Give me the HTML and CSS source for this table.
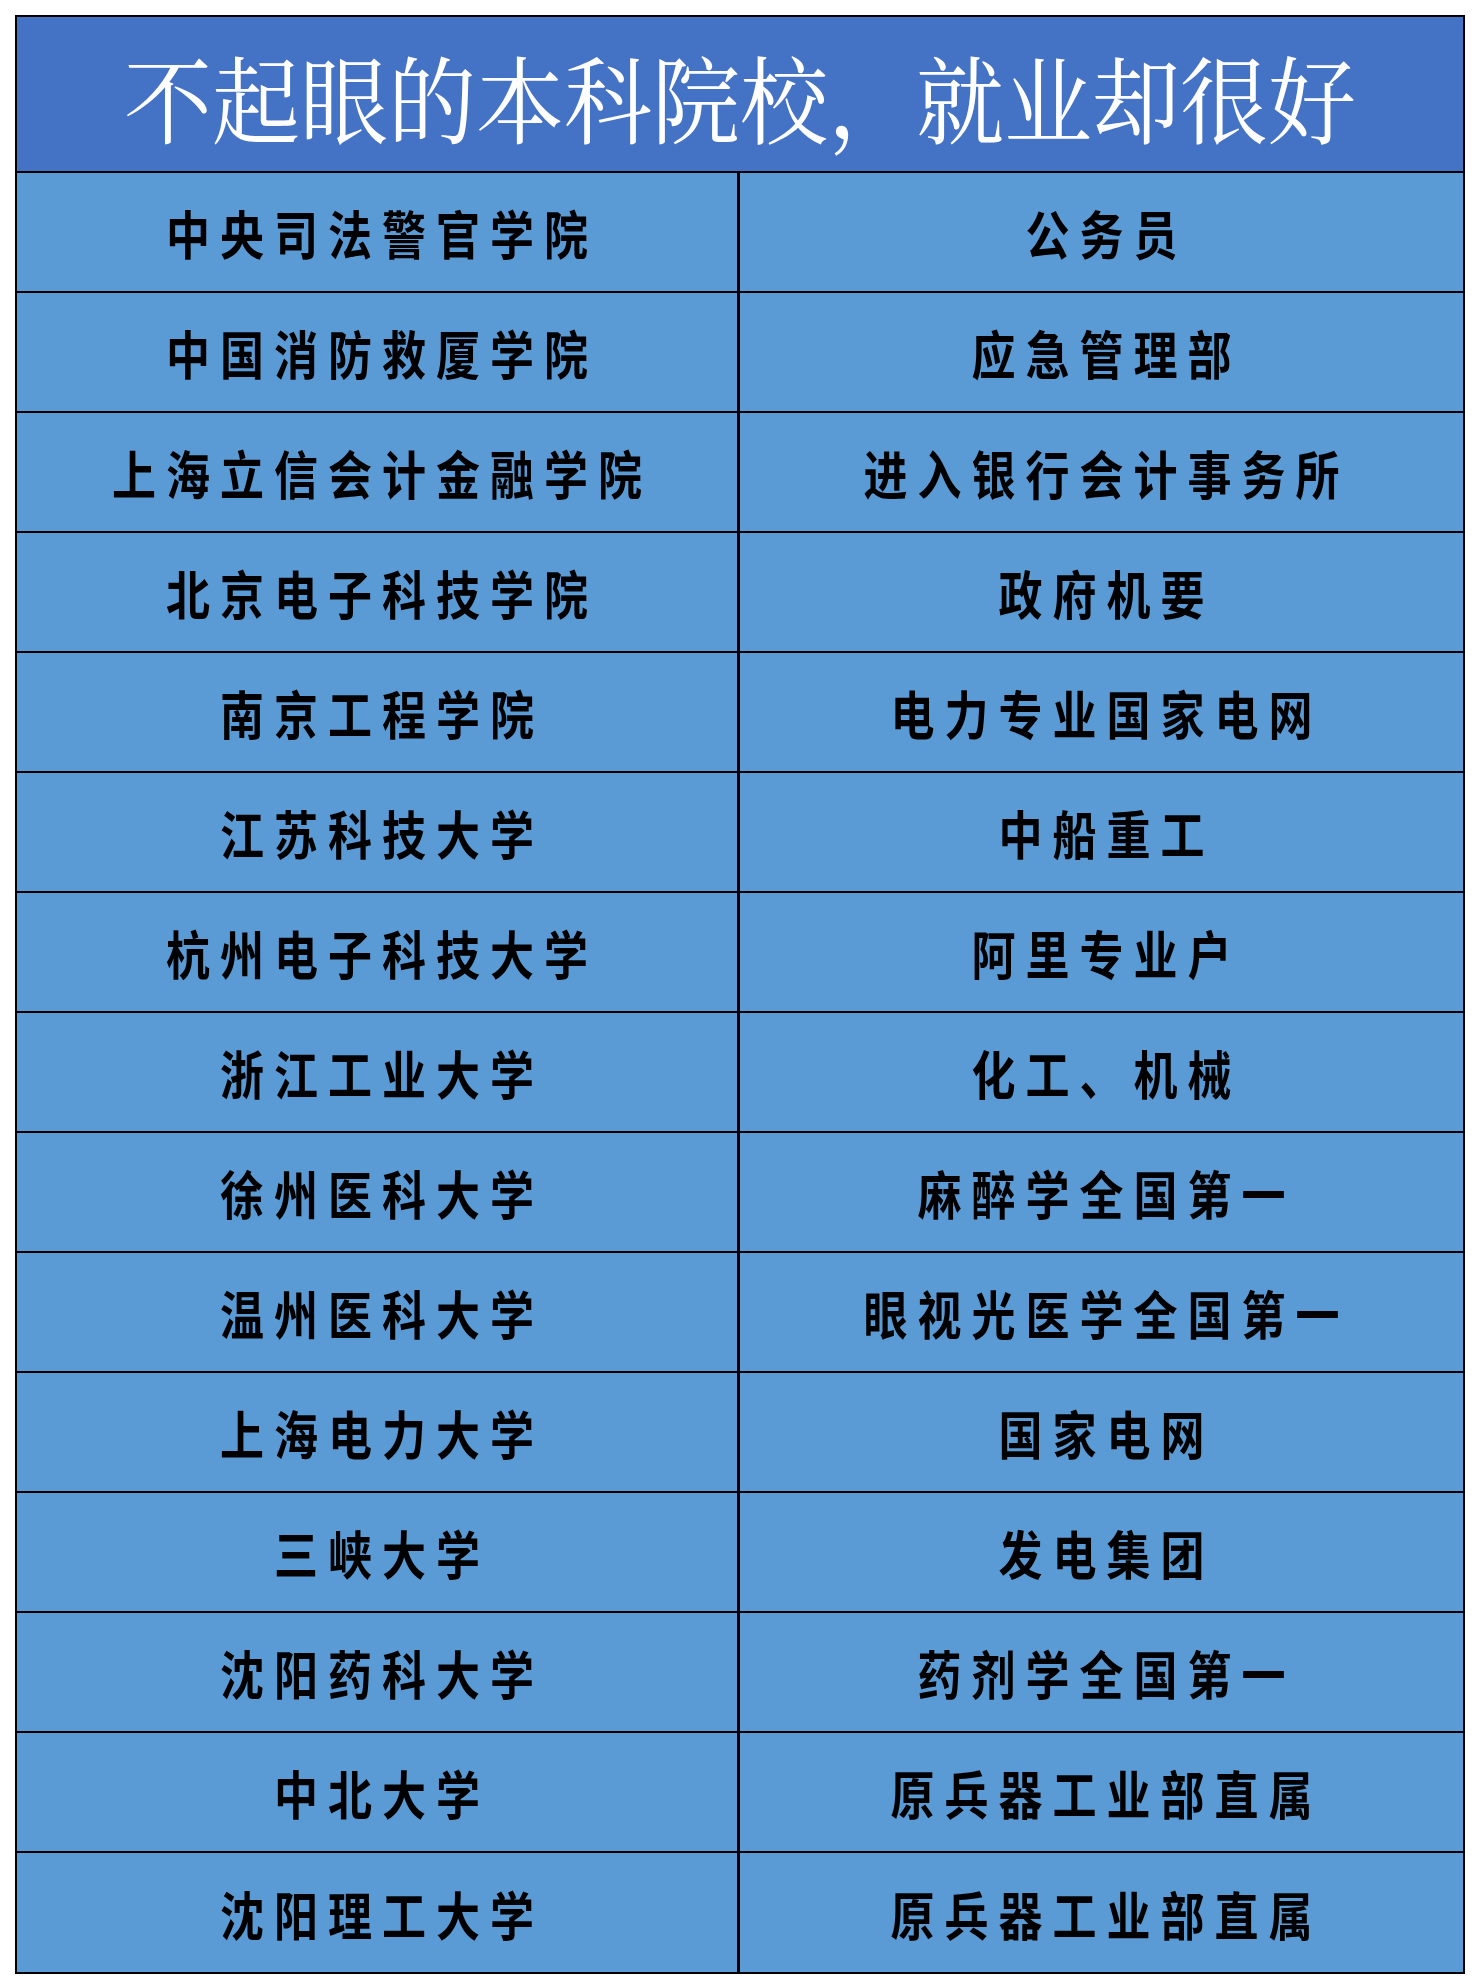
FILE: index.html
```html
<!DOCTYPE html>
<html lang="zh-CN">
<head>
<meta charset="utf-8">
<title>不起眼的本科院校，就业却很好</title>
<link rel="stylesheet" href="styles.css">
</head>
<body>
<div class="sheet">
  <div class="title"><span class="title-text">不起眼的本科院校，就业却很好</span></div>
  <div class="grid">
    <div class="cell left"><span class="txt">中央司法警官学院</span></div>
    <div class="cell"><span class="txt">公务员</span></div>
    <div class="cell left"><span class="txt">中国消防救厦学院</span></div>
    <div class="cell"><span class="txt">应急管理部</span></div>
    <div class="cell left"><span class="txt">上海立信会计金融学院</span></div>
    <div class="cell"><span class="txt">进入银行会计事务所</span></div>
    <div class="cell left"><span class="txt">北京电子科技学院</span></div>
    <div class="cell"><span class="txt">政府机要</span></div>
    <div class="cell left"><span class="txt">南京工程学院</span></div>
    <div class="cell"><span class="txt">电力专业国家电网</span></div>
    <div class="cell left"><span class="txt">江苏科技大学</span></div>
    <div class="cell"><span class="txt">中船重工</span></div>
    <div class="cell left"><span class="txt">杭州电子科技大学</span></div>
    <div class="cell"><span class="txt">阿里专业户</span></div>
    <div class="cell left"><span class="txt">浙江工业大学</span></div>
    <div class="cell"><span class="txt">化工、机械</span></div>
    <div class="cell left"><span class="txt">徐州医科大学</span></div>
    <div class="cell"><span class="txt">麻醉学全国第一</span></div>
    <div class="cell left"><span class="txt">温州医科大学</span></div>
    <div class="cell"><span class="txt">眼视光医学全国第一</span></div>
    <div class="cell left"><span class="txt">上海电力大学</span></div>
    <div class="cell"><span class="txt">国家电网</span></div>
    <div class="cell left"><span class="txt">三峡大学</span></div>
    <div class="cell"><span class="txt">发电集团</span></div>
    <div class="cell left"><span class="txt">沈阳药科大学</span></div>
    <div class="cell"><span class="txt">药剂学全国第一</span></div>
    <div class="cell left"><span class="txt">中北大学</span></div>
    <div class="cell"><span class="txt">原兵器工业部直属</span></div>
    <div class="cell left last"><span class="txt">沈阳理工大学</span></div>
    <div class="cell last"><span class="txt">原兵器工业部直属</span></div>
  </div>
</div>
</body>
</html>
```
FILE: styles.css
```css
html, body {
  margin: 0;
  padding: 0;
  background: #ffffff;
}

body {
  padding: 15px 0 0 15px;
}

.sheet {
  width: 1450px;
  border: 2px solid #000;
  box-sizing: border-box;
  background: #5b9bd5;
}

.title {
  height: 154px;
  background: #4472c4;
  border-bottom: 2px solid #000;
  display: flex;
  align-items: center;
  justify-content: center;
}

.title-text {
  display: inline-block;
  color: #ffffff;
  font-family: "Noto Serif CJK SC", "Source Han Serif SC", "Noto Sans CJK SC", serif;
  font-size: 88px;
  line-height: 1;
  transform: translateY(2px) scaleY(1.08);
}

.grid {
  display: grid;
  grid-template-columns: 1fr 1fr;
}

.cell {
  height: 118px;
  border-bottom: 2px solid #000;
  display: flex;
  align-items: center;
  justify-content: center;
}

.cell.left {
  border-right: 3px solid #000;
}

.cell.last {
  border-bottom: none;
  height: 119px;
}

.txt {
  display: inline-block;
  font-family: "Noto Sans CJK SC", "Microsoft YaHei", sans-serif;
  font-weight: 700;
  font-size: 44px;
  line-height: 1;
  letter-spacing: 10px;
  margin-right: -10px;
  color: #000;
  transform: scaleY(1.2);
}
```
